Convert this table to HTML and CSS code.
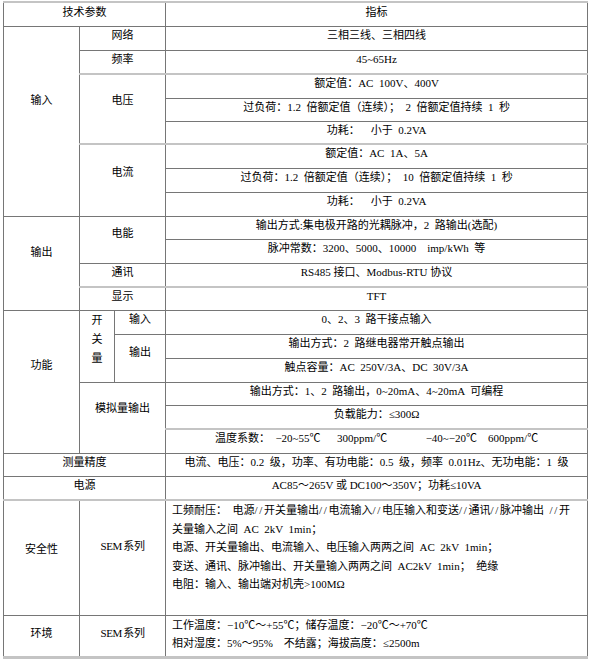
FILE: index.html
```html
<!DOCTYPE html>
<html lang="zh">
<head>
<meta charset="utf-8">
<title>技术参数</title>
<link rel="stylesheet" href="styles.css">
</head>
<body>
<table class="spec">
  <colgroup>
    <col class="c-a"><col class="c-b1"><col class="c-b2"><col class="c-c">
  </colgroup>
  <tr class="h24 head">
    <td colspan="3">技术参数</td>
    <td>指标</td>
  </tr>
  <tr class="h24">
    <td rowspan="8" class="pt-input">输入</td>
    <td colspan="2">网络</td>
    <td>三相三线、三相四线</td>
  </tr>
  <tr class="h24">
    <td colspan="2">频率</td>
    <td>45~65Hz</td>
  </tr>
  <tr class="h24 sep">
    <td colspan="2" rowspan="3" class="pt-volt">电压</td>
    <td>额定值：AC 100V、400V</td>
  </tr>
  <tr class="h23">
    <td>过负荷：1.2 倍额定值（连续）； 2 倍额定值持续 1 秒</td>
  </tr>
  <tr class="h23">
    <td>功耗：&nbsp; 小于 0.2VA</td>
  </tr>
  <tr class="h24 sep">
    <td colspan="2" rowspan="3" class="pt-cur">电流</td>
    <td>额定值：AC 1A、5A</td>
  </tr>
  <tr class="h24">
    <td>过负荷：1.2 倍额定值（连续）； 10 倍额定值持续 1 秒</td>
  </tr>
  <tr class="h24">
    <td>功耗：&nbsp; 小于 0.2VA</td>
  </tr>
  <tr class="h23">
    <td rowspan="4" class="pt-out">输出</td>
    <td colspan="2" rowspan="2" class="pt-energy">电能</td>
    <td>输出方式:集电极开路的光耦脉冲，2 路输出(选配)</td>
  </tr>
  <tr class="h24">
    <td>脉冲常数：3200、5000、10000&nbsp; imp/kWh 等</td>
  </tr>
  <tr class="h24">
    <td colspan="2">通讯</td>
    <td class="tight">RS485 接口、Modbus-RTU 协议</td>
  </tr>
  <tr class="h23 sep">
    <td colspan="2">显示</td>
    <td>TFT</td>
  </tr>
  <tr class="h24">
    <td rowspan="6" class="pt-func">功能</td>
    <td rowspan="3" class="vert">开<br>关<br>量</td>
    <td>输入</td>
    <td>0、2、3 路干接点输入</td>
  </tr>
  <tr class="h24">
    <td rowspan="2" class="pt-swout">输出</td>
    <td>输出方式：2 路继电器常开触点输出</td>
  </tr>
  <tr class="h24">
    <td>触点容量：AC 250V/3A、DC 30V/3A</td>
  </tr>
  <tr class="h23">
    <td colspan="2" rowspan="3" class="pt-analog">模拟量输出</td>
    <td>输出方式：1、2 路输出，0~20mA、4~20mA 可编程</td>
  </tr>
  <tr class="h24">
    <td>负载能力：≤300Ω</td>
  </tr>
  <tr class="h24 sep">
    <td>温度系数： −20~55℃&nbsp;&nbsp; 300ppm/℃&nbsp;&nbsp;&nbsp;&nbsp;&nbsp;&nbsp; −40~−20℃&nbsp; 600ppm/℃</td>
  </tr>
  <tr class="h23">
    <td colspan="3">测量精度</td>
    <td>电流、电压：0.2 级，功率、有功电能：0.5 级，频率 0.01Hz、无功电能：1 级</td>
  </tr>
  <tr class="h24">
    <td colspan="3">电源</td>
    <td class="tight">AC85～265V 或 DC100～350V；功耗≤10VA</td>
  </tr>
  <tr class="h115 sep">
    <td class="pt-safe">安全性</td>
    <td colspan="2" class="pt-safe2 sem">SEM 系列</td>
    <td class="multi safe">工频耐压： 电源<span class="sl">//</span>开关量输出<span class="sl">//</span>电流输入<span class="sl">//</span>电压输入和变送<span class="sl">//</span>通讯<span class="sl">//</span>脉冲输出 <span class="sl">//</span>开<br>关量输入之间 AC 2kV 1min；<br>电源、开关量输出、电流输入、电压输入两两之间 AC 2kV 1min；<br>变送、通讯、脉冲输出、开关量输入两两之间 AC2kV 1min； 绝缘<br>电阻：输入、输出端对机壳&gt;100MΩ</td>
  </tr>
  <tr class="h42 last">
    <td class="pt-env">环境</td>
    <td colspan="2" class="pt-env sem">SEM 系列</td>
    <td class="multi env">工作温度：−10℃～+55℃；储存温度：−20℃～+70℃<br>相对湿度：5%～95%&nbsp; 不结露；海拔高度：≤2500m</td>
  </tr>
</table>
</body>
</html>
```

FILE: styles.css
```css
html, body {
  margin: 0;
  padding: 0;
  background: #ffffff;
}

body {
  padding: 1px 0 0 3px;
  font-family: "Liberation Serif", "Noto Sans CJK SC", serif;
  font-size: 11px;
  color: #000000;
}

.spec {
  border-collapse: collapse;
  table-layout: fixed;
  width: 585px;
}

.c-a { width: 76px; }
.c-b1 { width: 35px; }
.c-b2 { width: 51px; }
.c-c { width: 422px; }

.spec td {
  border: 1px solid #767676;
  padding: 1px 2px 0;
  text-align: center;
  vertical-align: top;
  line-height: 14px;
  white-space: nowrap;
  word-spacing: 0.25em;
  overflow: hidden;
}

.h23 { height: 23px; }
.h24 { height: 24px; }
.h115 { height: 115px; }
.h42 { height: 42px; }

.head td {
  border-top: 2px solid #c4c4c4;
  padding-top: 2px;
}

.sep td {
  border-top: 2px solid #c4c4c4;
}

.last td {
  border-bottom: 3px solid #c4c4c4;
}

.pt-input { padding-top: 66px !important; }
.pt-volt { padding-top: 18px !important; }
.pt-cur { padding-top: 20px !important; }
.pt-out { padding-top: 28px !important; }
.pt-energy { padding-top: 9px !important; }
.pt-func { padding-top: 47px !important; }
.pt-swout { padding-top: 10px !important; }
.pt-analog { padding-top: 18px !important; }
.pt-safe { padding-top: 41px !important; }
.pt-safe2 { padding-top: 38px !important; }
.pt-env { padding-top: 10px !important; }

.spec td.tight {
  word-spacing: 0;
}

.spec td.sem {
  word-spacing: -1px;
  letter-spacing: -0.4px;
}

.vert {
  line-height: 19px !important;
  padding-top: 0 !important;
}

.multi {
  text-align: left !important;
  padding-left: 6px !important;
}

.sl {
  letter-spacing: 1.7px;
}

.safe {
  line-height: 18.5px !important;
  padding-top: 0 !important;
}

.env {
  line-height: 18px !important;
  padding-top: 0 !important;
}
```
